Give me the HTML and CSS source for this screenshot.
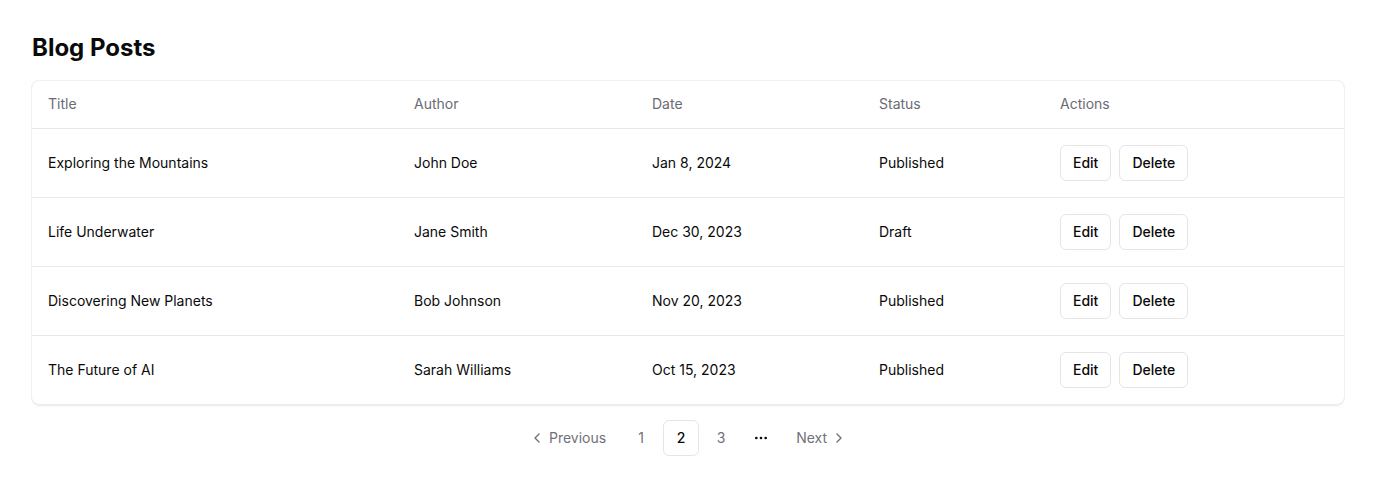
FILE: index.html
```html
<!DOCTYPE html>
<html lang="en">
<head>
<meta charset="utf-8">
<title>Blog Posts</title>
<link rel="stylesheet" href="styles.css">
</head>
<body>
<main class="page">
  <h1 class="page-title">Blog Posts</h1>
  <div class="card">
    <table class="table">
      <colgroup>
        <col class="c-title"><col class="c-author"><col class="c-date"><col class="c-status"><col class="c-actions">
      </colgroup>
      <thead>
        <tr><th>Title</th><th>Author</th><th>Date</th><th>Status</th><th>Actions</th></tr>
      </thead>
      <tbody>
        <tr><td>Exploring the Mountains</td><td>John Doe</td><td>Jan 8, 2024</td><td>Published</td>
          <td><div class="actions"><button class="btn">Edit</button><button class="btn">Delete</button></div></td></tr>
        <tr><td>Life Underwater</td><td>Jane Smith</td><td>Dec 30, 2023</td><td>Draft</td>
          <td><div class="actions"><button class="btn">Edit</button><button class="btn">Delete</button></div></td></tr>
        <tr><td>Discovering New Planets</td><td>Bob Johnson</td><td>Nov 20, 2023</td><td>Published</td>
          <td><div class="actions"><button class="btn">Edit</button><button class="btn">Delete</button></div></td></tr>
        <tr><td>The Future of AI</td><td>Sarah Williams</td><td>Oct 15, 2023</td><td>Published</td>
          <td><div class="actions"><button class="btn">Edit</button><button class="btn">Delete</button></div></td></tr>
      </tbody>
    </table>
  </div>
  <nav class="pagination">
    <a class="pg pg-prev"><svg class="chev" viewBox="0 0 24 24"><path d="M15 18l-6-6 6-6"/></svg><span>Previous</span></a>
    <a class="pg pg-num">1</a>
    <a class="pg pg-num active">2</a>
    <a class="pg pg-num">3</a>
    <span class="pg pg-num ellipsis"><svg viewBox="0 0 24 24" class="dots"><circle cx="5" cy="12" r="2"/><circle cx="12" cy="12" r="2"/><circle cx="19" cy="12" r="2"/></svg></span>
    <a class="pg pg-next"><span>Next</span><svg class="chev" viewBox="0 0 24 24"><path d="M9 18l6-6-6-6"/></svg></a>
  </nav>
</main>
</body>
</html>
```

FILE: styles.css
```css
* { box-sizing: border-box; }
html, body { margin: 0; padding: 0; background: #ffffff; }
body {
  font-family: Inter, "Noto Sans", "Liberation Sans", sans-serif;
  color: #0a0a0a;
  font-size: 14px;
}
.page { padding: 32px; }
.page-title {
  margin: 0 0 16px;
  font-size: 24px;
  line-height: 32px;
  font-weight: 700;
}
.card {
  border-top: 1px solid #f2f2f2;
  border-bottom: 1px solid #ebebeb;
  border-radius: 8px;
  box-shadow: -1px 0 0 #f0f0f0, 1px 0 0 #f0f0f0, 0 1px 2px rgba(0,0,0,0.06), 0 1px 3px rgba(0,0,0,0.04);
  background: #fff;
  overflow: hidden;
}
.table {
  width: 100%;
  border-collapse: collapse;
  table-layout: fixed;
}
.c-title { width: 366px; }
.c-author { width: 238px; }
.c-date { width: 227px; }
.c-status { width: 181px; }
.table th {
  height: 47px;
  padding: 0 16px;
  text-align: left;
  font-weight: 400;
  color: #6b6b74;
  border-bottom: 1px solid #e8e8e8;
  line-height: 20px;
}
.table td {
  height: 68px;
  padding: 16px;
  line-height: 20px;
  vertical-align: middle;
}
.table tbody tr + tr td { border-top: 1px solid #e8e8e8; }
.actions { display: flex; gap: 8px; }
.btn {
  height: 36px;
  padding: 0 12px;
  border: 1px solid #e5e5e5;
  border-radius: 6px;
  background: #fff;
  font-family: inherit;
  font-size: 14px;
  font-weight: 500;
  color: #0a0a0a;
}
.pagination {
  display: flex;
  justify-content: center;
  align-items: center;
  gap: 4px;
  margin-top: 15px;
}
.pg {
  height: 36px;
  display: inline-flex;
  align-items: center;
  justify-content: center;
  color: #71717a;
  font-size: 14px;
  border-radius: 6px;
  border: 1px solid transparent;
}
.pg-num { width: 36px; }
.pg-num.active { border-color: #e5e5e5; color: #0a0a0a; font-weight: 500; }
.pg-prev { padding: 0 12px 0 10px; gap: 4px; }
.pg-next { padding: 0 10px 0 12px; gap: 4px; }
.chev { width: 16px; height: 16px; fill: none; stroke: currentColor; stroke-width: 2; stroke-linecap: round; stroke-linejoin: round; }
.dots { width: 16px; height: 16px; fill: #0a0a0a; }
```
